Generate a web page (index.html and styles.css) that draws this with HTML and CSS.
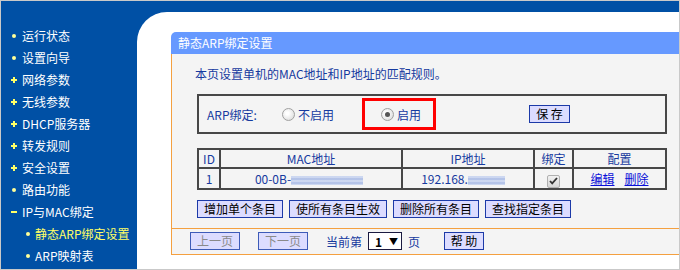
FILE: index.html
```html
<!DOCTYPE html>
<html lang="zh-CN">
<head>
    <meta charset="UTF-8">
    <title>静态ARP绑定设置</title>
    <link rel="stylesheet" href="styles.css">
</head>
<body>

    <div class="frame">
        <ul class="menu">
            <li class="leaf">运行状态</li>
            <li class="leaf">设置向导</li>
            <li class="closed">网络参数</li>
            <li class="closed">无线参数</li>
            <li class="closed">DHCP服务器</li>
            <li class="closed">转发规则</li>
            <li class="closed">安全设置</li>
            <li class="leaf">路由功能</li>
            <li class="open">IP与MAC绑定</li>
            <li class="sub active">静态ARP绑定设置</li>
            <li class="sub">ARP映射表</li>
        </ul>

        <div class="main">
            <div class="panel">
                <div class="panel-title">静态ARP绑定设置</div>
                <div class="panel-body">
                    <p class="intro">本页设置单机的MAC地址和IP地址的匹配规则。</p>

                    <div class="arp-box">
                        <span class="arp-label">ARP绑定:</span>
                        <span class="radio"></span>
                        <span class="radio-text">不启用</span>
                        <span class="highlight">
                            <span class="radio checked"></span>
                            <span class="radio-text">启用</span>
                        </span>
                        <button class="btn save">保 存</button>
                    </div>

                    <table class="list">
                        <colgroup>
                            <col style="width: 22px">
                            <col style="width: 182px">
                            <col style="width: 132px">
                            <col style="width: 39px">
                            <col>
                        </colgroup>
                        <tr>
                            <th>ID</th>
                            <th>MAC地址</th>
                            <th>IP地址</th>
                            <th>绑定</th>
                            <th>配置</th>
                        </tr>
                        <tr>
                            <td>1</td>
                            <td>00-0B-<span class="blur mac"></span></td>
                            <td>192.168.<span class="blur ip"></span></td>
                            <td>
                                <span class="check">
                                    <svg width="9" height="8" viewBox="0 0 9 8"><path d="M1 4l2.2 2.4L8 1" fill="none" stroke="#333" stroke-width="1.8"/></svg>
                                </span>
                            </td>
                            <td><a href="#">编辑</a><a href="#">删除</a></td>
                        </tr>
                    </table>

                    <div class="actions">
                        <button class="btn">增加单个条目</button>
                        <button class="btn">使所有条目生效</button>
                        <button class="btn">删除所有条目</button>
                        <button class="btn">查找指定条目</button>
                    </div>
                </div>

                <div class="pager">
                    <button class="btn disabled">上一页</button>
                    <button class="btn disabled">下一页</button>
                    <span class="pager-text">当前第</span>
                    <span class="select"><b>1</b><i>▼</i></span>
                    <span class="pager-text">页</span>
                    <button class="btn help">帮 助</button>
                </div>
            </div>
        </div>
    </div>

</body>
</html>
```

FILE: styles.css
```css
body {
    margin: 0;
    font-family: "Noto Sans CJK SC", "DejaVu Sans", sans-serif;
    font-size: 12px;
}
.frame {
    width: 680px;
    height: 270px;
    box-sizing: border-box;
    border: 1px solid #c9c9c9;
    background: #0050a5;
    display: flex;
    overflow: hidden;
}

/* left menu */
.menu {
    list-style: none;
    margin: 0;
    padding: 24px 0 0 0;
    width: 136px;
    flex-shrink: 0;
}
.menu li {
    position: relative;
    height: 22px;
    line-height: 22px;
    padding-left: 21px;
    color: #fff;
    white-space: nowrap;
}
.menu li::before {
    content: "";
    position: absolute;
    background: #ffff99;
}
.menu .leaf::before {
    left: 11px;
    top: 9px;
    width: 4px;
    height: 4px;
    border-radius: 50%;
}
.menu .closed::before,
.menu .open::before {
    left: 10px;
    top: 10px;
    width: 6px;
    height: 2px;
    background: #ffff66;
}
.menu .closed::after {
    content: "";
    position: absolute;
    left: 12px;
    top: 8px;
    width: 2px;
    height: 6px;
    background: #ffff66;
}
.menu .sub {
    padding-left: 34px;
}
.menu .sub::before {
    left: 25px;
    top: 9px;
    width: 4px;
    height: 4px;
    border-radius: 50%;
}
.menu .active {
    color: #ffff66;
}

/* main area */
.main {
    flex: 1;
    margin-top: 11px;
    background: #fff;
    border-top-left-radius: 30px;
    padding: 20px 0 0 34px;
}
.panel-title {
    height: 22px;
    line-height: 22px;
    padding-left: 7px;
    background: #6699ff;
    color: #fff;
    border-top-left-radius: 5px;
}
.panel-body {
    background: #f4f4f4;
    border-left: 1px solid #f4a040;
    border-bottom: 1px solid #f4a040;
    padding: 10px 0 10px 25px;
}
.intro {
    margin: 0 0 0 -2px;
    line-height: 20px;
    color: #163a9f;
}

.arp-box {
    display: flex;
    align-items: center;
    width: 470px;
    height: 40px;
    box-sizing: border-box;
    margin-top: 10px;
    border: 2px solid #474747;
    padding-left: 8px;
    color: #163a9f;
}
.arp-label {
    width: 75px;
}
.radio {
    width: 13px;
    height: 13px;
    box-sizing: border-box;
    border-radius: 50%;
    border: 1px solid #a0a0a0;
    background: radial-gradient(circle at 40% 40%, #fff 15%, #d4d4d4 100%);
    position: relative;
}
.radio.checked::after {
    content: "";
    position: absolute;
    left: 3px;
    top: 3px;
    width: 5px;
    height: 5px;
    border-radius: 50%;
    background: #555;
}
.radio-text {
    margin-left: 3px;
}
.highlight {
    display: flex;
    align-items: center;
    height: 32px;
    box-sizing: border-box;
    border: 3px solid #ff0000;
    margin-left: 28px;
    padding: 0 12px 0 16px;
}

.btn {
    height: 18px;
    padding: 0 6px;
    border: 1px solid #1c3aa8;
    background: #dcdcff;
    font-family: inherit;
    font-size: 12px;
    line-height: 16px;
    color: #000;
    margin: 0;
}
.save {
    margin-left: 93px;
    width: 41px;
    padding: 0;
}

.list {
    margin-top: 14px;
    width: 470px;
    table-layout: fixed;
    border-collapse: collapse;
    color: #163a9f;
}
.list th,
.list td {
    border: 2px solid #474747;
    height: 17px;
    padding: 0;
    text-align: center;
    font-weight: normal;
    line-height: 17px;
    white-space: nowrap;
}
.blur {
    display: inline-block;
    height: 9px;
    vertical-align: -1px;
    background: repeating-linear-gradient(to bottom, #c5d2f0 0, #c5d2f0 2px, #a9bbe6 2px, #a9bbe6 4px);
    opacity: 0.85;
}
.blur.mac { width: 72px; margin-right: 4px; }
.blur.ip { width: 37px; margin-right: 10px; }
.check {
    display: inline-flex;
    align-items: center;
    justify-content: center;
    width: 13px;
    height: 13px;
    box-sizing: border-box;
    border: 1px solid #b0b0b0;
    border-radius: 2px;
    background: linear-gradient(#f2f2f2, #d6d6d6);
    vertical-align: -2px;
}
.list a {
    color: #0a10d8;
    margin: 0 5px;
}

.actions {
    display: flex;
    gap: 6px;
    margin-top: 10px;
}
.actions .btn {
    padding: 0 6px;
}

.pager {
    display: flex;
    align-items: center;
    height: 25px;
    background: #f4f4f4;
    border-left: 1px solid #f4a040;
    border-bottom: 1px solid #f4a040;
    padding-left: 18px;
    color: #163a9f;
}
.pager .disabled {
    width: 50px;
    padding: 0;
    color: #8a8a8a;
    border-color: #3d5bb8;
    margin-right: 18px;
}
.select {
    display: inline-flex;
    align-items: center;
    justify-content: space-between;
    width: 34px;
    height: 18px;
    box-sizing: border-box;
    margin: 0 6px;
    padding: 0 3px 0 6px;
    border: 1px solid #1a1a40;
    background: #fff;
    color: #000;
}
.select b {
    font-weight: bold;
}
.select i {
    font-style: normal;
    font-size: 9px;
}
.help {
    width: 40px;
    padding: 0;
    margin-left: 24px;
}
```
